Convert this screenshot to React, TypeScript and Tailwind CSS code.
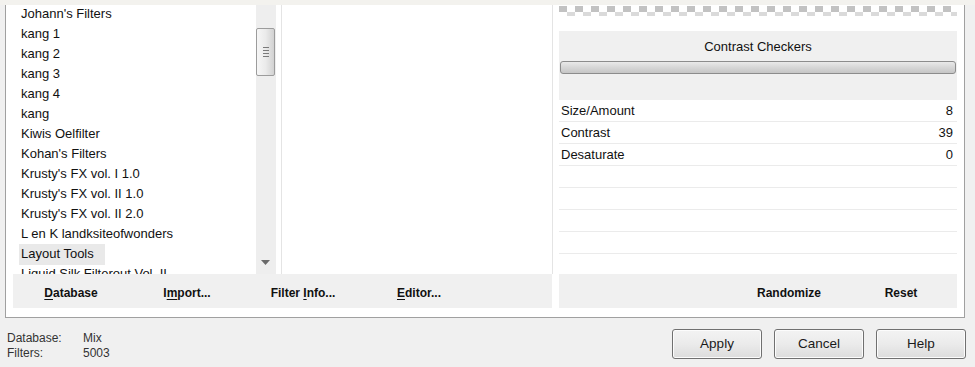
import React from "react";

const filters = [
  "Johann's Filters",
  "kang 1",
  "kang 2",
  "kang 3",
  "kang 4",
  "kang",
  "Kiwis Oelfilter",
  "Kohan's Filters",
  "Krusty's FX vol. I 1.0",
  "Krusty's FX vol. II 1.0",
  "Krusty's FX vol. II 2.0",
  "L en K landksiteofwonders",
  "Layout Tools",
  "Liquid Silk Filterout Vol. II",
];

const params = [
  { name: "Size/Amount", value: "8" },
  { name: "Contrast", value: "39" },
  { name: "Desaturate", value: "0" },
  { name: "", value: "" },
  { name: "", value: "" },
  { name: "", value: "" },
  { name: "", value: "" },
  { name: "", value: "" },
];

function BarLabel({ pre, u, post }: { pre: string; u: string; post: string }) {
  return (
    <div className="w-[116px] text-center text-[12px] font-bold text-[#111]">
      {pre}
      <span className="underline underline-offset-2">{u}</span>
      {post}
    </div>
  );
}

function Scrollbar() {
  return (
    <div className="relative w-[20px] h-full shrink-0 bg-[#eeeeee]">
      <div className="absolute left-0 top-[23px] w-[19px] h-[48px] rounded-[2px] border border-[#9c9c9c] bg-linear-to-r from-[#f6f6f6] via-[#ebebeb] to-[#d2d2d2] flex flex-col items-center justify-center gap-[2px]">
        <div className="w-[6px] h-px bg-[#7a7a7a]" />
        <div className="w-[6px] h-px bg-[#7a7a7a]" />
        <div className="w-[6px] h-px bg-[#7a7a7a]" />
        <div className="w-[6px] h-px bg-[#7a7a7a]" />
      </div>
      <svg className="absolute left-[5px] top-[255px]" width="9" height="5" viewBox="0 0 9 5">
        <path d="M0 0 L9 0 L4.5 5 Z" fill="#6a6a6a" />
      </svg>
    </div>
  );
}

function DialogButton({ label }: { label: string }) {
  return (
    <button className="w-[90px] h-[30px] rounded-[3px] border border-[#707070] bg-linear-to-b from-[#f3f3f3] via-[#ebebeb] to-[#dcdcdc] text-[13.5px] text-[#1a1a1a] shadow-[inset_0_0_0_1px_#fcfcfc]">
      {label}
    </button>
  );
}

export default function App() {
  return (
    <div className="w-[975px] h-[367px] bg-[#f0f0f0] flex flex-col overflow-hidden font-['Liberation_Sans',Arial,sans-serif] text-[#111]">
      <div className="h-[5px] shrink-0 bg-[#f3f2ee]" />

      {/* group box */}
      <div className="ml-[5px] w-[960px] h-[313px] shrink-0 bg-white border-l border-r border-b border-[#a0a0a0] flex flex-col">
        <div className="flex h-[269px] shrink-0">
          {/* filter list */}
          <div className="w-[250px] h-full overflow-hidden pl-[13px]">
            <div className="-mt-px">
              {filters.map((f) => (
                <div key={f} className="h-[20px] flex items-center">
                  <span
                    className={
                      f === "Layout Tools"
                        ? "h-[21px] w-[86px] px-[2px] flex items-center bg-[#e9e9e9] text-[13px] whitespace-nowrap"
                        : "px-[2px] text-[13px] whitespace-nowrap"
                    }
                  >
                    {f}
                  </span>
                </div>
              ))}
            </div>
          </div>
          <Scrollbar />
          <div className="w-[5px]" />
          {/* preview */}
          <div className="w-[272px] h-full border-l border-r border-[#e4e4e4] bg-white" />
          <div className="w-[6px]" />

          {/* right panel */}
          <div className="w-[398px] h-full flex flex-col overflow-hidden">
            <div className="h-[11px] shrink-0 flex flex-col">
              <div className="h-[6px] mt-px bg-[repeating-linear-gradient(90deg,#c2c2c2_0_8px,transparent_8px_16px)]" />
              <div className="h-[4px] bg-[repeating-linear-gradient(90deg,transparent_0_8px,#dadada_8px_16px)]" />
            </div>
            <div className="h-[15px] shrink-0" />
            <div className="h-[69px] shrink-0 bg-[#f0f0f0] flex flex-col">
              <div className="h-[30px] flex items-center justify-center text-[13px] pt-[1px]">
                Contrast Checkers
              </div>
              <div className="h-[13px] mx-px rounded-[3px] border border-[#8c8c8c] bg-linear-to-b from-[#e9e9e9] via-[#d6d6d6] to-[#c6c6c6]" />
            </div>
            <div className="flex flex-col shrink-0">
              {params.map((p, i) => (
                <div
                  key={i}
                  className="h-[22px] shrink-0 flex items-center justify-between pl-[2px] pr-[4px] border-b border-[#ebebeb] text-[13px]"
                >
                  <span>{p.name}</span>
                  <span>{p.value}</span>
                </div>
              ))}
            </div>
          </div>
        </div>

        {/* button bars */}
        <div className="flex h-[34px] shrink-0">
          <div className="ml-[7px] w-[539px] h-full bg-[#f0f0f0] flex items-center pt-[3px]">
            <BarLabel pre="" u="D" post="atabase" />
            <BarLabel pre="I" u="m" post="port..." />
            <BarLabel pre="Filter " u="I" post="nfo..." />
            <BarLabel pre="" u="E" post="ditor..." />
          </div>
          <div className="ml-[7px] w-[398px] h-full bg-[#f0f0f0] flex items-center justify-end pt-[3px]">
            <div className="w-[112px] text-center text-[12px] font-bold">Randomize</div>
            <div className="w-[112px] text-center text-[12px] font-bold">Reset</div>
          </div>
        </div>
      </div>

      {/* status + dialog buttons */}
      <div className="flex flex-1 items-start pl-[7px] pr-[9px] pt-[12px]">
        <div className="grid grid-cols-[76px_auto] content-start mt-px text-[12px] leading-[15px] text-[#333]">
          <span>Database:</span>
          <span>Mix</span>
          <span>Filters:</span>
          <span>5003</span>
        </div>
        <div className="ml-auto flex gap-[12px] -mt-px">
          <DialogButton label="Apply" />
          <DialogButton label="Cancel" />
          <DialogButton label="Help" />
        </div>
      </div>
    </div>
  );
}
